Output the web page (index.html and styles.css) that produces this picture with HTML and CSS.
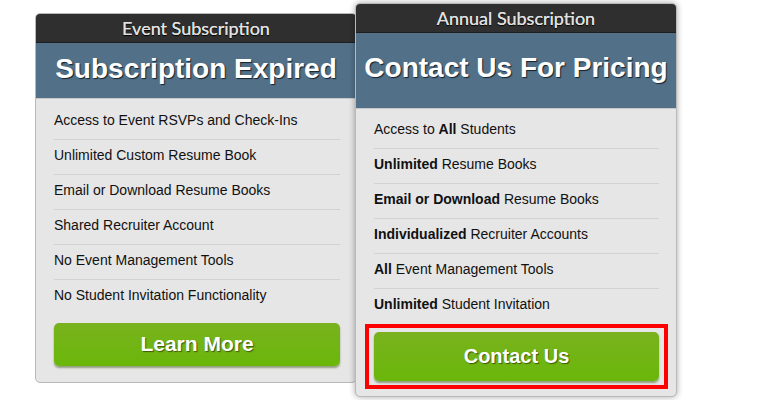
FILE: index.html
```html
<!DOCTYPE html>
<html>
<head>
<meta charset="utf-8">
<link rel="stylesheet" href="styles.css">
</head>
<body>
<div class="plans">
  <div class="card card-event">
    <div class="card-head">Event Subscription</div>
    <div class="card-title">Subscription Expired</div>
    <ul class="features">
      <li>Access to Event RSVPs and Check-Ins</li>
      <li>Unlimited Custom Resume Book</li>
      <li>Email or Download Resume Books</li>
      <li>Shared Recruiter Account</li>
      <li>No Event Management Tools</li>
      <li>No Student Invitation Functionality</li>
    </ul>
    <div class="actions">
      <a class="btn btn-learn">Learn More</a>
    </div>
  </div>
  <div class="card card-annual">
    <div class="card-head">Annual Subscription</div>
    <div class="card-title">Contact Us For Pricing</div>
    <ul class="features">
      <li>Access to <b>All</b> Students</li>
      <li><b>Unlimited</b> Resume Books</li>
      <li><b>Email or Download</b> Resume Books</li>
      <li><b>Individualized</b> Recruiter Accounts</li>
      <li><b>All</b> Event Management Tools</li>
      <li><b>Unlimited</b> Student Invitation</li>
    </ul>
    <div class="actions">
      <div class="highlight">
        <a class="btn btn-contact">Contact Us</a>
      </div>
    </div>
  </div>
</div>
</body>
</html>
```
FILE: styles.css
```css
html, body {
  margin: 0;
  padding: 0;
  background: #ffffff;
}
body {
  font-family: "Liberation Sans", Arial, sans-serif;
  width: 766px;
  height: 400px;
  overflow: hidden;
}
.plans {
  display: flex;
  align-items: flex-start;
  padding: 3px 0 0 35px;
}
.card {
  width: 322px;
  box-sizing: border-box;
  background: #e6e6e6;
  border: 1px solid #b9b9b9;
  border-radius: 5px;
  overflow: hidden;
  display: flex;
  flex-direction: column;
}
.card-event {
  margin-top: 10px;
  height: 370px;
}
.card-annual {
  margin-left: -2px;
  height: 394px;
  position: relative;
  z-index: 2;
  box-shadow: 0 0 6px rgba(0, 0, 0, 0.35);
}
.card-head {
  height: 28px;
  background: #2f2f2f;
  border-bottom: 1px solid #1e1e1e;
  color: #e0e0e0;
  font-family: Lato, "Open Sans", sans-serif;
  font-size: 18px;
  line-height: 29px;
  text-align: center;
  text-shadow: 0 0 0.6px #e0e0e0, 0 1px 1px #000;
}
.card-title {
  background: #527189;
  color: #ffffff;
  font-weight: bold;
  font-size: 28px;
  text-align: center;
  text-shadow: 1px 1px 1px #14212b;
  border-bottom: 1px solid #c8c8c8;
}
.card-event .card-title {
  height: 55px;
  line-height: 52px;
}
.card-annual .card-title {
  height: 75px;
  line-height: 70px;
}
.features {
  list-style: none;
  margin: 0;
  padding: 0 16px 0 18px;
}
.card-event .features {
  padding-top: 6px;
}
.card-annual .features {
  padding-top: 5px;
  padding-right: 17px;
}
.features li {
  height: 34px;
  line-height: 30px;
  font-size: 14px;
  color: #111111;
  border-bottom: 1px solid #d2d2d2;
}
.features li:last-child {
  border-bottom: none;
  height: 35px;
}
.features b {
  font-weight: bold;
}
.actions {
  padding: 0 16px 0 18px;
}
.card-event .actions {
  padding-top: 8px;
}
.card-annual .actions {
  padding: 0 8px 0 9px;
}
.highlight {
  border: 4px solid #ff0000;
  padding: 4px 5px;
}
.btn {
  display: block;
  text-align: center;
  color: #ffffff;
  font-weight: bold;
  text-shadow: 1px 1px 1px #3b5a0a;
  background: linear-gradient(#79b21e, #6ab70a);
  border-radius: 5px;
  box-shadow: 0 2px 2px rgba(40, 70, 0, 0.45);
}
.btn-learn {
  height: 43px;
  line-height: 42px;
  font-size: 21px;
}
.btn-contact {
  height: 49px;
  line-height: 48px;
  font-size: 20px;
}
```
